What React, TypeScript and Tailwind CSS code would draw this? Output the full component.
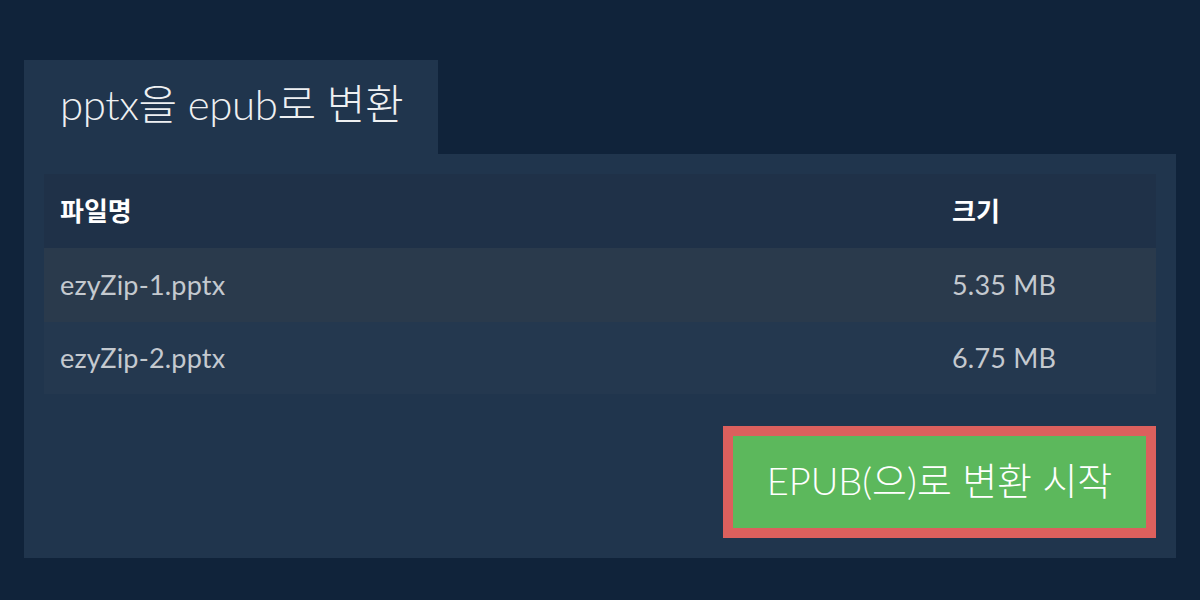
export default function App() {
  const rows = [
    { name: "ezyZip-1.pptx", size: "5.35 MB", bg: "bg-[#2a3a4c]", h: "h-[74px]" },
    { name: "ezyZip-2.pptx", size: "6.75 MB", bg: "bg-[#24384f]", h: "h-[72px]" },
  ];
  return (
    <div
      className="w-[1200px] h-[600px] bg-[#10233a] px-6 pt-[60px]"
      style={{ fontFamily: 'Lato, "Noto Sans CJK KR", sans-serif' }}
    >
      <div className="flex">
        <div className="w-[414px] h-[94px] bg-[#20354d] flex items-center pl-9 pb-[6px]">
          <span className="text-[42px] font-light text-[#eef0f2] tracking-[-0.4px] leading-none">pptx을 epub로 변환</span>
        </div>
      </div>
      <div className="bg-[#20354d] p-5 flex flex-col">
        <div className="flex flex-col">
          <div className="h-[74px] bg-[#1f3148] flex items-center pl-4 text-white font-bold text-[26px]">
            <div className="flex-1">파일명</div>
            <div className="w-[204px]">크기</div>
          </div>
          {rows.map((r) => (
            <div key={r.name} className={`${r.h} ${r.bg} flex items-center pl-4 text-[#c4c9cf] text-[27px] tracking-[0.2px]`}>
              <div className="flex-1">{r.name}</div>
              <div className="w-[204px]">{r.size}</div>
            </div>
          ))}
        </div>
        <div className="flex justify-end mt-8">
          <div className="w-[433px] h-[112px] border-[10px] border-[#dc605d] bg-[#5cb85c] flex items-center justify-center">
            <span className="text-[38px] font-light text-white pb-1 leading-none">EPUB(으)로 변환 시작</span>
          </div>
        </div>
      </div>
    </div>
  );
}
